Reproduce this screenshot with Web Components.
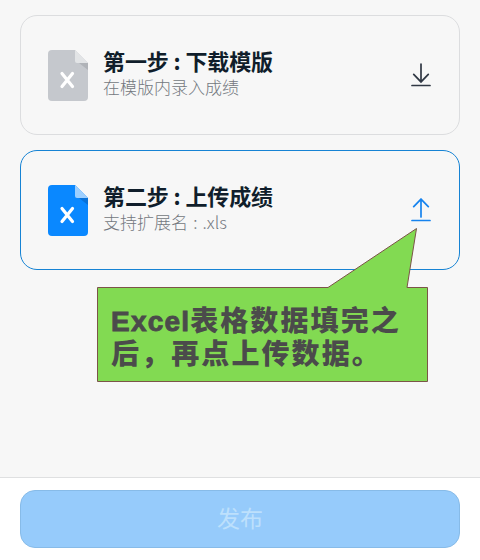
<!DOCTYPE html>
<html lang="zh-CN">
<head>
<meta charset="utf-8">
<title>上传成绩</title>
<style>
html,body{margin:0;height:100%;background:#f7f7f7;font-family:"Noto Sans CJK SC",sans-serif}
</style>
</head>
<body>
<grade-page></grade-page>
<script>
class FileIcon extends HTMLElement {
  constructor() {
    super();
    this.attachShadow({mode: 'open'}).innerHTML = `
    <style>:host{display:block;width:40px;height:51px;flex:none}svg{display:block}</style>
    <svg width="40" height="51" viewBox="0 0 40 51">
      <path fill="var(--file)" d="M4 0H27L40 13V47a4 4 0 0 1-4 4H4a4 4 0 0 1-4-4V4a4 4 0 0 1 4-4Z"/>
      <path fill="var(--shade)" d="M31 13H40V20Z"/>
      <path fill="var(--fold)" d="M27 0L40 13H29a2 2 0 0 1-2-2Z"/>
      <path d="M14 23.5L24.5 36.5M24.5 23.5L14 36.5" stroke="#fff" stroke-width="3.2" stroke-linecap="round"/>
    </svg>`;
  }
}
customElements.define('file-icon', FileIcon);

class TransferIcon extends HTMLElement {
  connectedCallback() {
    const up = this.getAttribute('dir') === 'up';
    this.attachShadow({mode: 'open'}).innerHTML = `
    <style>:host{display:block;width:20px;height:24px;flex:none}svg{display:block}</style>
    <svg width="20" height="24" viewBox="0 0 20 24" fill="none" stroke="currentColor" stroke-width="1.7" stroke-linecap="round">
      <path d="${up ? 'M10 19V1.3M2.7 8.7L10 1.1L17.3 8.7' : 'M10 1V18.7M2.7 11.3L10 18.9L17.3 11.3'}"/>
      <path d="M1 22.5H19"/>
    </svg>`;
  }
}
customElements.define('transfer-icon', TransferIcon);

class StepCard extends HTMLElement {
  connectedCallback() {
    this.attachShadow({mode: 'open'}).innerHTML = `
    <style>
    :host{--file:#c5c8cd;--shade:#b0b3b8;--fold:#e2e4e6;display:flex;align-items:center;box-sizing:border-box;
      height:120px;padding:0 28px 0 27px;border:1px solid #dcdddf;border-radius:17px;color:#303844}
    :host([active]){--file:#0a88ff;--shade:#0871d8;--fold:#9dcfff;border-color:#1683d4;color:#1683ee}
    .text{flex:1;margin-left:15px;padding-bottom:7px;white-space:pre}
    .title{font-size:22px;line-height:28px;font-weight:700;letter-spacing:-.12px;color:#101e2b}
    .sub{padding-top:1px;font-size:17px;line-height:23px;font-weight:300;color:#737880}
    </style>
    <file-icon></file-icon>
    <div class="text"><div class="title"><slot name="title"></slot></div><div class="sub"><slot name="sub"></slot></div></div>
    <transfer-icon dir="${this.hasAttribute('active') ? 'up' : 'down'}"></transfer-icon>`;
  }
}
customElements.define('step-card', StepCard);

class TipCallout extends HTMLElement {
  constructor() {
    super();
    this.attachShadow({mode: 'open'}).innerHTML = `
    <style>
    :host{display:block;width:332px;height:155px}
    svg{position:absolute;inset:0}
    .words{position:relative;padding:76px 0 0 14px;font-size:28px;line-height:33px;font-weight:900;letter-spacing:2.1px;color:#4b4b4b;white-space:nowrap}
    </style>
    <svg width="332" height="155"><path d="M.5 60.5H231L319.500 1.500L310 60.500H330.500V154.500H.5Z" fill="#82da52" stroke="#7b5549"/></svg>
    <div class="words"><slot></slot></div>`;
  }
}
customElements.define('tip-callout', TipCallout);

class PublishBar extends HTMLElement {
  constructor() {
    super();
    this.attachShadow({mode: 'open'}).innerHTML = `
    <style>
    :host{display:block;box-sizing:border-box;height:83px;padding:12px 20px 0;background:#fff;border-top:1px solid #dfe0e1}
    button{display:block;box-sizing:border-box;width:100%;height:58px;padding:0 0 4px;border:1px solid #87bbe8;border-radius:15px;background:#96cbfb;color:#bde0fc;font:400 23px "Noto Sans CJK SC",sans-serif}
    </style>
    <button><slot></slot></button>`;
  }
}
customElements.define('publish-bar', PublishBar);

class GradePage extends HTMLElement {
  constructor() {
    super();
    this.attachShadow({mode: 'open'}).innerHTML = `
    <style>
    :host{position:relative;display:flex;flex-direction:column;width:480px;height:560px;overflow:hidden}
    main{flex:1;display:flex;flex-direction:column;gap:15px;padding:15px 20px 0}
    tip-callout{position:absolute;left:97px;top:227px}
    .latin{font-family:"Liberation Sans",sans-serif;line-height:1;letter-spacing:1.2px;-webkit-text-stroke:.9px}
    </style>
    <main>
      <step-card><span slot="title">第一步 : 下载模版</span><span slot="sub">在模版内录入成绩</span></step-card>
      <step-card active><span slot="title">第二步 : 上传成绩</span><span slot="sub" style="word-spacing:1.4px">支持扩展名 : .xls</span></step-card>
    </main>
    <publish-bar>发布</publish-bar>
    <tip-callout><span class="latin">Excel</span>表格数据填完之<br>后，再点上传数据。</tip-callout>`;
  }
}
customElements.define('grade-page', GradePage);
</script>
</body>
</html>
